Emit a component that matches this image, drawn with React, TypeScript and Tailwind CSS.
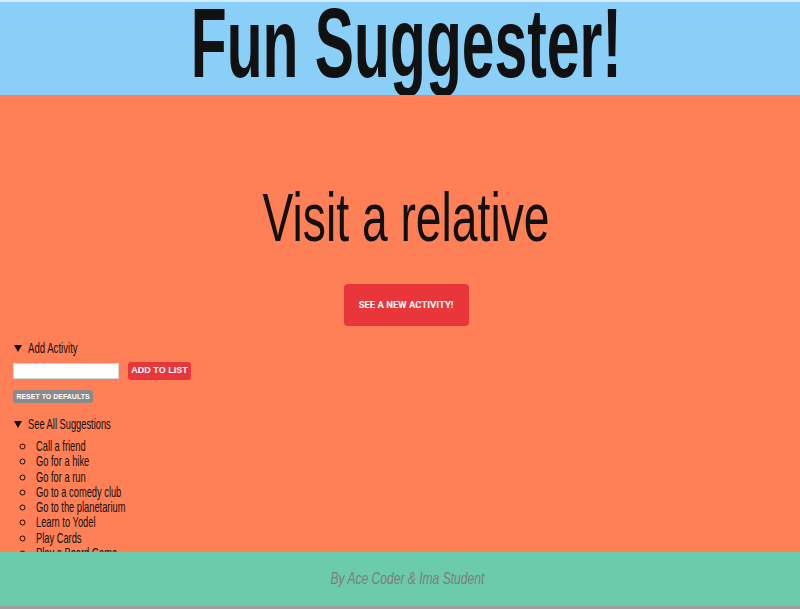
import React from 'react';

const activities = [
  'Call a friend',
  'Go for a hike',
  'Go for a run',
  'Go to a comedy club',
  'Go to the planetarium',
  'Learn to Yodel',
  'Play Cards',
  'Play a Board Game',
  'Read a book',
  'Visit a relative',
];

const narrow = "font-['Liberation_Sans_Narrow','Liberation_Sans',sans-serif]";

function Triangle() {
  return (
    <svg width="8" height="7" viewBox="0 0 8 7" className="mr-[6px] shrink-0">
      <polygon points="0,0 8,0 4,7" fill="#111" />
    </svg>
  );
}

export default function App() {
  return (
    <div className="min-h-[609px] bg-[#ff7f56] pb-[80px]">
      <header className="h-[95px] overflow-hidden border-t-2 border-[#d4ecfa] bg-[#89cff8] pl-[12px] text-center">
        <h1 className={`${narrow} inline-block scale-x-[0.6] text-[98px] font-bold leading-[82px] text-[#111]`}>
          Fun Suggester!
        </h1>
      </header>

      <main className="flex flex-col items-center pl-[12px]">
        <h2 className={`${narrow} mt-[88px] inline-block scale-x-[0.68] text-[68px] font-normal leading-[68px] text-[#111]`}>
          Visit a relative
        </h2>
        <button
          type="button"
          className="mt-[33px] h-[42px] w-[125px] rounded-[4px] bg-[#e8363a] font-['Roboto',sans-serif] text-[9.5px] font-bold text-white"
        >
          SEE A NEW ACTIVITY!
        </button>
      </main>

      <section className="px-[13px] font-['Liberation_Sans',sans-serif] text-[#111]">
        <div className="mt-[14px] flex h-[16px] items-center pl-[1px]">
          <Triangle />
          <span className={`${narrow} inline-block origin-left scale-x-[0.64] text-[15px]`}>Add Activity</span>
        </div>
        <div className="mt-[6px] flex h-[18px] items-center gap-[9px]">
          <input
            type="text"
            className="h-[16px] w-[106px] border border-[#d6d6d6] bg-white outline-none"
          />
          <button
            type="button"
            className="h-[18px] w-[63px] rounded-[3px] bg-[#e8363a] text-[9px] font-bold text-white"
          >
            ADD TO LIST
          </button>
        </div>
        <button
          type="button"
          className="mt-[10px] block h-[13px] w-[80px] rounded-[3px] bg-[#8a8a8a] text-[7px] font-bold leading-[13px] text-white"
        >
          RESET TO DEFAULTS
        </button>

        <div className="mt-[13px] flex h-[16px] items-center pl-[1px]">
          <Triangle />
          <span className={`${narrow} inline-block origin-left scale-x-[0.62] text-[15px]`}>
            See All Suggestions
          </span>
        </div>
        <ul className="mt-[6px] list-[circle] pl-[23px] text-[15px] leading-[15.3px]">
          {activities.map((a) => (
            <li key={a} className="marker:text-[16px]">
              <span className={`${narrow} inline-block origin-left scale-x-[0.62]`}>{a}</span>
            </li>
          ))}
        </ul>
      </section>

      <footer className="fixed inset-x-0 bottom-0 flex h-[57px] items-center justify-center border-b-[3px] border-[#9e9e9e] bg-[#6bcbaa] pl-[14px]">
        <span className={`${narrow} inline-block scale-x-[0.71] text-[17px] italic text-[#7d7d7d]`}>
          By Ace Coder &amp; Ima Student
        </span>
      </footer>
    </div>
  );
}
